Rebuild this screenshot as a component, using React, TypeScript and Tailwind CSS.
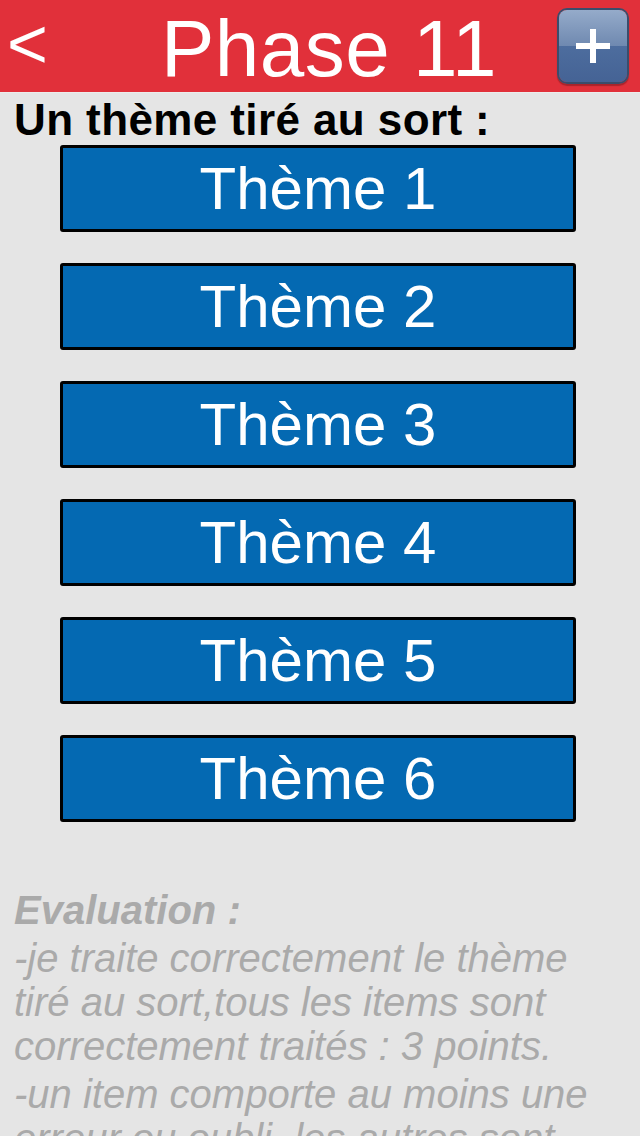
export default function App() {
  const themes = [1, 2, 3, 4, 5, 6]

  return (
    <div
      className="min-h-[1136px] bg-[#e5e5e5] overflow-hidden"
      style={{ fontFamily: '"Liberation Sans", Arial, sans-serif' }}
    >
      {/* barre du haut */}
      <div className="h-[93px] bg-[#e1303a] flex items-start border-b border-[#ececec]">
        <div className="w-[161px] pl-[7px] pt-[9px] text-white text-[70px] leading-none">&lt;</div>
        <div className="pt-[9px] text-white text-[80px] leading-none tracking-[0.5px]">Phase 11</div>
        <button className="ml-auto mr-[11px] mt-[8px] w-[72px] h-[76px] rounded-[10px] border-2 border-[#3b4d6b] overflow-hidden flex flex-col relative shadow-[0_2px_1px_rgba(0,0,0,0.25)]">
          <div className="h-1/2 w-full bg-gradient-to-b from-[#95abca] to-[#6f89b0]" />
          <div className="h-1/2 w-full bg-gradient-to-b from-[#4d6d9e] to-[#456395]" />
          <div className="absolute inset-0 flex items-center justify-center">
            <svg width="36" height="36" viewBox="0 0 36 36">
              <rect x="15" y="1" width="6" height="34" fill="#fff" />
              <rect x="1" y="15" width="34" height="6" fill="#fff" />
            </svg>
          </div>
        </button>
      </div>

      <div className="pl-[14px] mt-[5px] text-[44px] leading-none font-bold text-black tracking-[0.4px]">
        Un thème tiré au sort :
      </div>

      <div className="mt-[3px] flex flex-col gap-[31px] pl-[60px]">
        {themes.map((n) => (
          <div
            key={n}
            className="w-[516px] h-[87px] bg-[#0469b2] border-[3px] border-black rounded-[3px] flex items-center justify-center text-white text-[60px] leading-none"
          >
            Thème {n}
          </div>
        ))}
      </div>

      <div className="mt-[68px] pl-[14px] w-[610px] text-[#aaaaaa] italic">
        <div className="text-[40px] leading-none font-bold">Evaluation :</div>
        <p className="mt-[6px] text-[40px] leading-[44px]">
          -je traite correctement le thème tiré au sort,tous les items sont correctement traités : 3 points.
        </p>
        <p className="mt-[4px] text-[40px] leading-[44px]">
          -un item comporte au moins une erreur ou oubli, les autres sont correctement traités : 2 points.
        </p>
      </div>
    </div>
  )
}
